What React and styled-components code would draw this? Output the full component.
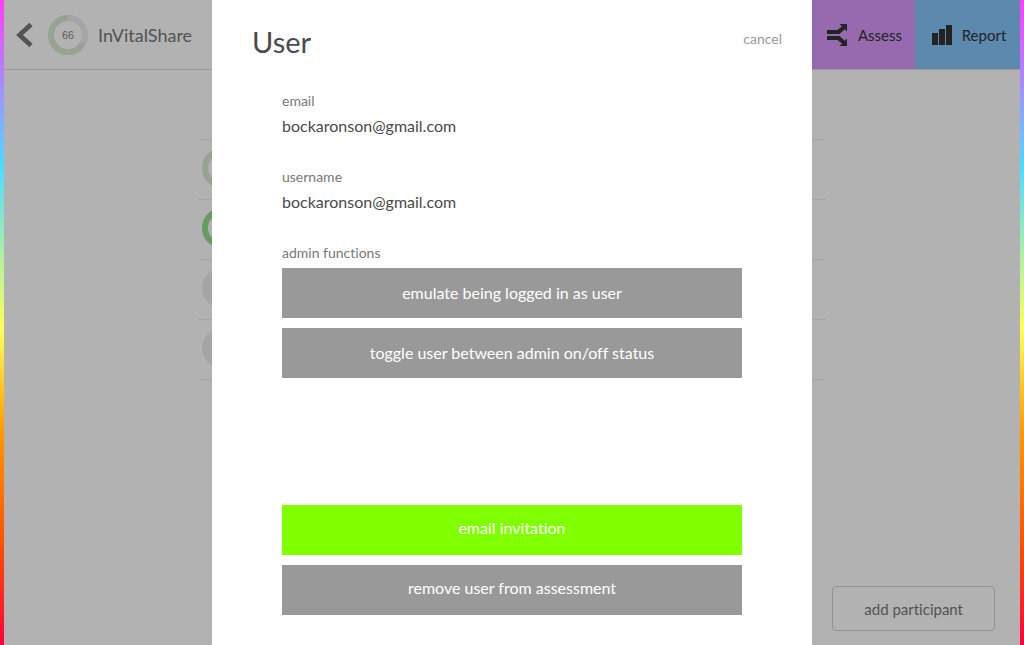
import React from "react";
import styled, { createGlobalStyle } from "styled-components";

const GlobalStyle = createGlobalStyle`
  * { box-sizing: border-box; }
  body {
    margin: 0;
    background: #fff;
    color: #4a4a4a;
    font-family: Lato, "Liberation Sans", sans-serif;
    font-size: 16px;
    line-height: 24px;
    font-variant-ligatures: none;
  }
  button { font: inherit; font-variant-ligatures: none; cursor: pointer; }
  h1, h2, dl, dd { margin: 0; font-weight: 400; }
`;

const Page = styled.div`
  display: flex;
  min-height: 100vh;
`;

const RainbowEdge = styled.div`
  flex: 0 0 4px;
  background: linear-gradient(
    #ff3cff 0%,
    #4ddcff 26%,
    #ffff5a 51%,
    #ff9900 67%,
    #ff4d00 85%,
    #ff0040 100%
  );
`;

const Content = styled.div`
  flex: 1;
  min-width: 0;
  display: flex;
  flex-direction: column;
`;

const Header = styled.header`
  display: flex;
  height: 70px;
  border-bottom: 1px solid #dadada;
`;

const Brand = styled.div`
  flex: 1;
  display: flex;
  align-items: center;
  padding-left: 10px;
  gap: 10px;
`;

const BackButton = styled.button`
  display: flex;
  padding: 0;
  margin-right: 4px;
  border: 0;
  background: none;
`;

const BrandName = styled.h1`
  font-size: 18px;
  line-height: 24px;
  color: #777;
`;

const NavLink = styled.a`
  display: flex;
  align-items: center;
  justify-content: center;
  gap: 10px;
  width: ${({ $width }) => $width};
  padding-left: 3px;
  background: ${({ $color }) => $color};
  color: #333;
  font-size: 15px;
  text-decoration: none;
`;

const ParticipantList = styled.ul`
  align-self: center;
  width: 100%;
  max-width: 628px;
  margin: 69px 0 0;
  padding: 0;
  border-top: 1px solid #ededed;
  list-style: none;
`;

const Participant = styled.li`
  display: flex;
  align-items: center;
  height: 60px;
  padding: 0 4px 4px;
  border-bottom: 1px solid #ededed;
`;

const Footer = styled.footer`
  display: flex;
  justify-content: flex-end;
  margin-top: auto;
  padding: 14px 25px;
`;

const OutlineButton = styled.button`
  height: 45px;
  padding: 0 31px;
  border: 1px solid #d2d2d2;
  border-radius: 4px;
  background: none;
  color: #777;
  font-size: 15px;
`;

const Overlay = styled.div`
  position: fixed;
  inset: 0 4px;
  display: flex;
  justify-content: center;
  background: rgba(0, 0, 0, 0.3);
`;

const Dialog = styled.section`
  display: flex;
  flex-direction: column;
  width: 100%;
  max-width: 600px;
  padding: 0 70px 30px;
  overflow: auto;
  background: #fff;
`;

const DialogHeader = styled.div`
  display: flex;
  align-items: center;
  justify-content: space-between;
  margin: 20px -40px 25px -30px;
`;

const Title = styled.h2`
  font-size: 29px;
  line-height: 44px;
`;

const CancelButton = styled.button`
  margin: 0 0 6px;
  padding: 0;
  border: 0;
  background: none;
  color: #999;
  font-size: 14px;
`;

const Field = styled.div`
  margin-bottom: 26px;
`;

const Label = styled.dt`
  font-size: 14px;
  line-height: 24px;
  color: #777;
`;

const Value = styled.dd`
  line-height: 26px;
`;

const ButtonStack = styled.div`
  display: flex;
  flex-direction: column;
  gap: 10px;
  padding-top: 3px;
`;

const DialogFooter = styled(ButtonStack)`
  margin-top: auto;
`;

const ActionButton = styled.button`
  height: 50px;
  flex: none;
  padding: 0 10px;
  border: 0;
  background: ${({ $primary }) => ($primary ? "#80ff00" : "#999")};
  color: #fff;

  ${DialogFooter} & {
    padding-bottom: 4px;
  }
`;

function ScoreRing({ value, color, label }) {
  const length = 2 * Math.PI * 17;
  return (
    <svg width="40" height="40" viewBox="0 0 40 40" aria-hidden={!label}>
      <circle cx="20" cy="20" r="17" fill="none" stroke="#ececec" strokeWidth="6" />
      <circle
        cx="20"
        cy="20"
        r="17"
        fill="none"
        stroke={color}
        strokeWidth="6"
        strokeDasharray={`${(length * value) / 100} ${length}`}
        transform="matrix(0 -1 -1 0 40 40)"
      />
      {label && (
        <text x="20" y="24" textAnchor="middle" fontSize="11" fill="#888" fontFamily="Liberation Sans, sans-serif">
          {label}
        </text>
      )}
    </svg>
  );
}

function EmptyScore() {
  return (
    <svg width="40" height="40" viewBox="0 0 40 40" aria-hidden="true">
      <circle cx="20" cy="20" r="20" fill="#ececec" />
    </svg>
  );
}

function BackIcon() {
  return (
    <svg width="20" height="28" viewBox="0 0 20 28" fill="none" stroke="#777" strokeWidth="4.6">
      <path d="M17 3.5 L5.5 14 L17 24.5" />
    </svg>
  );
}

function AssessIcon() {
  return (
    <svg width="21" height="22" viewBox="0 0 21 22" fill="#333">
      <path d="M12.5 0H20V7.5L17.8 5.2L12.5 10H0V6H10.5L15 2.5Z" />
      <path d="M12.5 22H20V14.5L17.8 16.8L12.5 12H0V16H10.5L15 19.5Z" />
    </svg>
  );
}

function ReportIcon() {
  return (
    <svg width="20" height="20" viewBox="0 0 20 20" fill="#333">
      <path d="M0 8H6V20H0ZM7 4H13V20H7ZM14 0H20V20H14Z" />
    </svg>
  );
}

export default function App() {
  return (
    <>
      <GlobalStyle />
      <Page>
        <RainbowEdge />
        <Content>
          <Header>
            <Brand>
              <BackButton aria-label="Back">
                <BackIcon />
              </BackButton>
              <ScoreRing value={66} color="#d4ebd0" label="66" />
              <BrandName>InVitalShare</BrandName>
            </Brand>
            <NavLink href="#assess" $color="#d899fb" $width="104px">
              <AssessIcon />
              Assess
            </NavLink>
            <NavLink href="#report" $color="#86c5fb" $width="105px">
              <ReportIcon />
              Report
            </NavLink>
          </Header>
          <ParticipantList>
            <Participant>
              <ScoreRing value={66} color="#d4ebd0" />
            </Participant>
            <Participant>
              <ScoreRing value={100} color="#92df8c" />
            </Participant>
            <Participant>
              <EmptyScore />
            </Participant>
            <Participant>
              <EmptyScore />
            </Participant>
          </ParticipantList>
          <Footer>
            <OutlineButton>add participant</OutlineButton>
          </Footer>
        </Content>
        <RainbowEdge />
      </Page>
      <Overlay>
        <Dialog role="dialog" aria-labelledby="dialog-title">
          <DialogHeader>
            <Title id="dialog-title">User</Title>
            <CancelButton>cancel</CancelButton>
          </DialogHeader>
          <dl>
            <Field>
              <Label>email</Label>
              <Value>bockaronson@gmail.com</Value>
            </Field>
            <Field>
              <Label>username</Label>
              <Value>bockaronson@gmail.com</Value>
            </Field>
            <Label>admin functions</Label>
            <dd>
              <ButtonStack>
                <ActionButton>emulate being logged in as user</ActionButton>
                <ActionButton>toggle user between admin on/off status</ActionButton>
              </ButtonStack>
            </dd>
          </dl>
          <DialogFooter>
            <ActionButton $primary>email invitation</ActionButton>
            <ActionButton>remove user from assessment</ActionButton>
          </DialogFooter>
        </Dialog>
      </Overlay>
    </>
  );
}
